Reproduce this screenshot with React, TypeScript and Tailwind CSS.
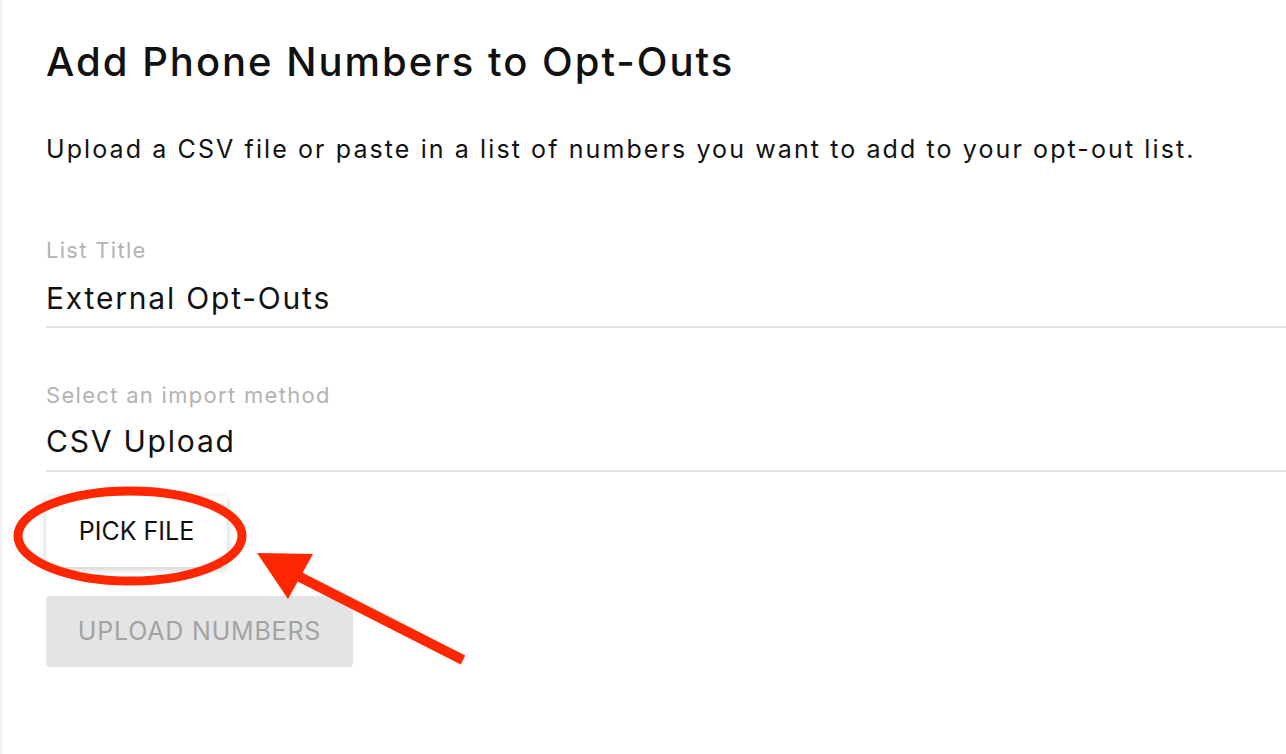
import React from 'react';

const Field = ({ label, value, labelTop, valueTop, lineTop }: { label: string; value: string; labelTop: string; valueTop: string; lineTop: string }) => (
  <div className="flex flex-col">
    <div className={`${labelTop} h-[22px] text-[22px] leading-[22px] text-[#b3b3b3] tracking-[1.3px]`}>{label}</div>
    <div className={`${valueTop} h-[30px] text-[30px] leading-[30px] text-[#111] tracking-[1.8px]`}>{value}</div>
    <div className={`${lineTop} h-[2px] bg-[#e2e2e2]`} />
  </div>
);

export default function App() {
  return (
    <div className="relative min-h-screen w-full overflow-hidden bg-white font-[Inter,sans-serif]">
      <div className="absolute left-0 top-0 h-full w-[4px] bg-gradient-to-r from-[#ececec] to-white" />

      <div className="flex flex-col pl-[46px] pt-[42px]">
        <h1 className="h-[40px] text-[40px] leading-[40px] font-medium text-[#111] tracking-[2px]">
          Add Phone Numbers to Opt-Outs
        </h1>
        <p className="mt-[55px] h-[24px] text-[25px] leading-[24px] text-[#111] tracking-[2.1px]">
          Upload a CSV file or paste in a list of numbers you want to add to your opt-out list.
        </p>

        <Field label="List Title" value="External Opt-Outs" labelTop="mt-[78px]" valueTop="mt-[22px]" lineTop="mt-[13px]" />
        <Field label="Select an import method" value="CSV Upload" labelTop="mt-[56px]" valueTop="mt-[20px]" lineTop="mt-[14px]" />

        <button className="mt-[24px] flex h-[71px] w-[181px] items-center justify-center rounded-[4px] bg-white text-[25px] text-[#111] shadow-[0_2px_7px_rgba(0,0,0,0.22)]">
          PICK FILE
        </button>
        <button className="mt-[29px] flex h-[71px] w-[307px] items-center justify-center rounded-[4px] bg-[#e4e4e4] text-[25px] text-[#a3a3a3] tracking-[0.8px]">
          UPLOAD NUMBERS
        </button>
      </div>

      {/* annotation */}
      <svg className="pointer-events-none absolute left-0 top-0" width="1286" height="754" viewBox="0 0 1286 754">
        <ellipse cx="130" cy="536" rx="112" ry="45" fill="none" stroke="#ff2600" strokeWidth="9" />
        <line x1="463" y1="660" x2="292" y2="573" stroke="#ff2600" strokeWidth="10" />
        <polygon points="257,553 313,554 288,599" fill="#ff2600" />
      </svg>
    </div>
  );
}
